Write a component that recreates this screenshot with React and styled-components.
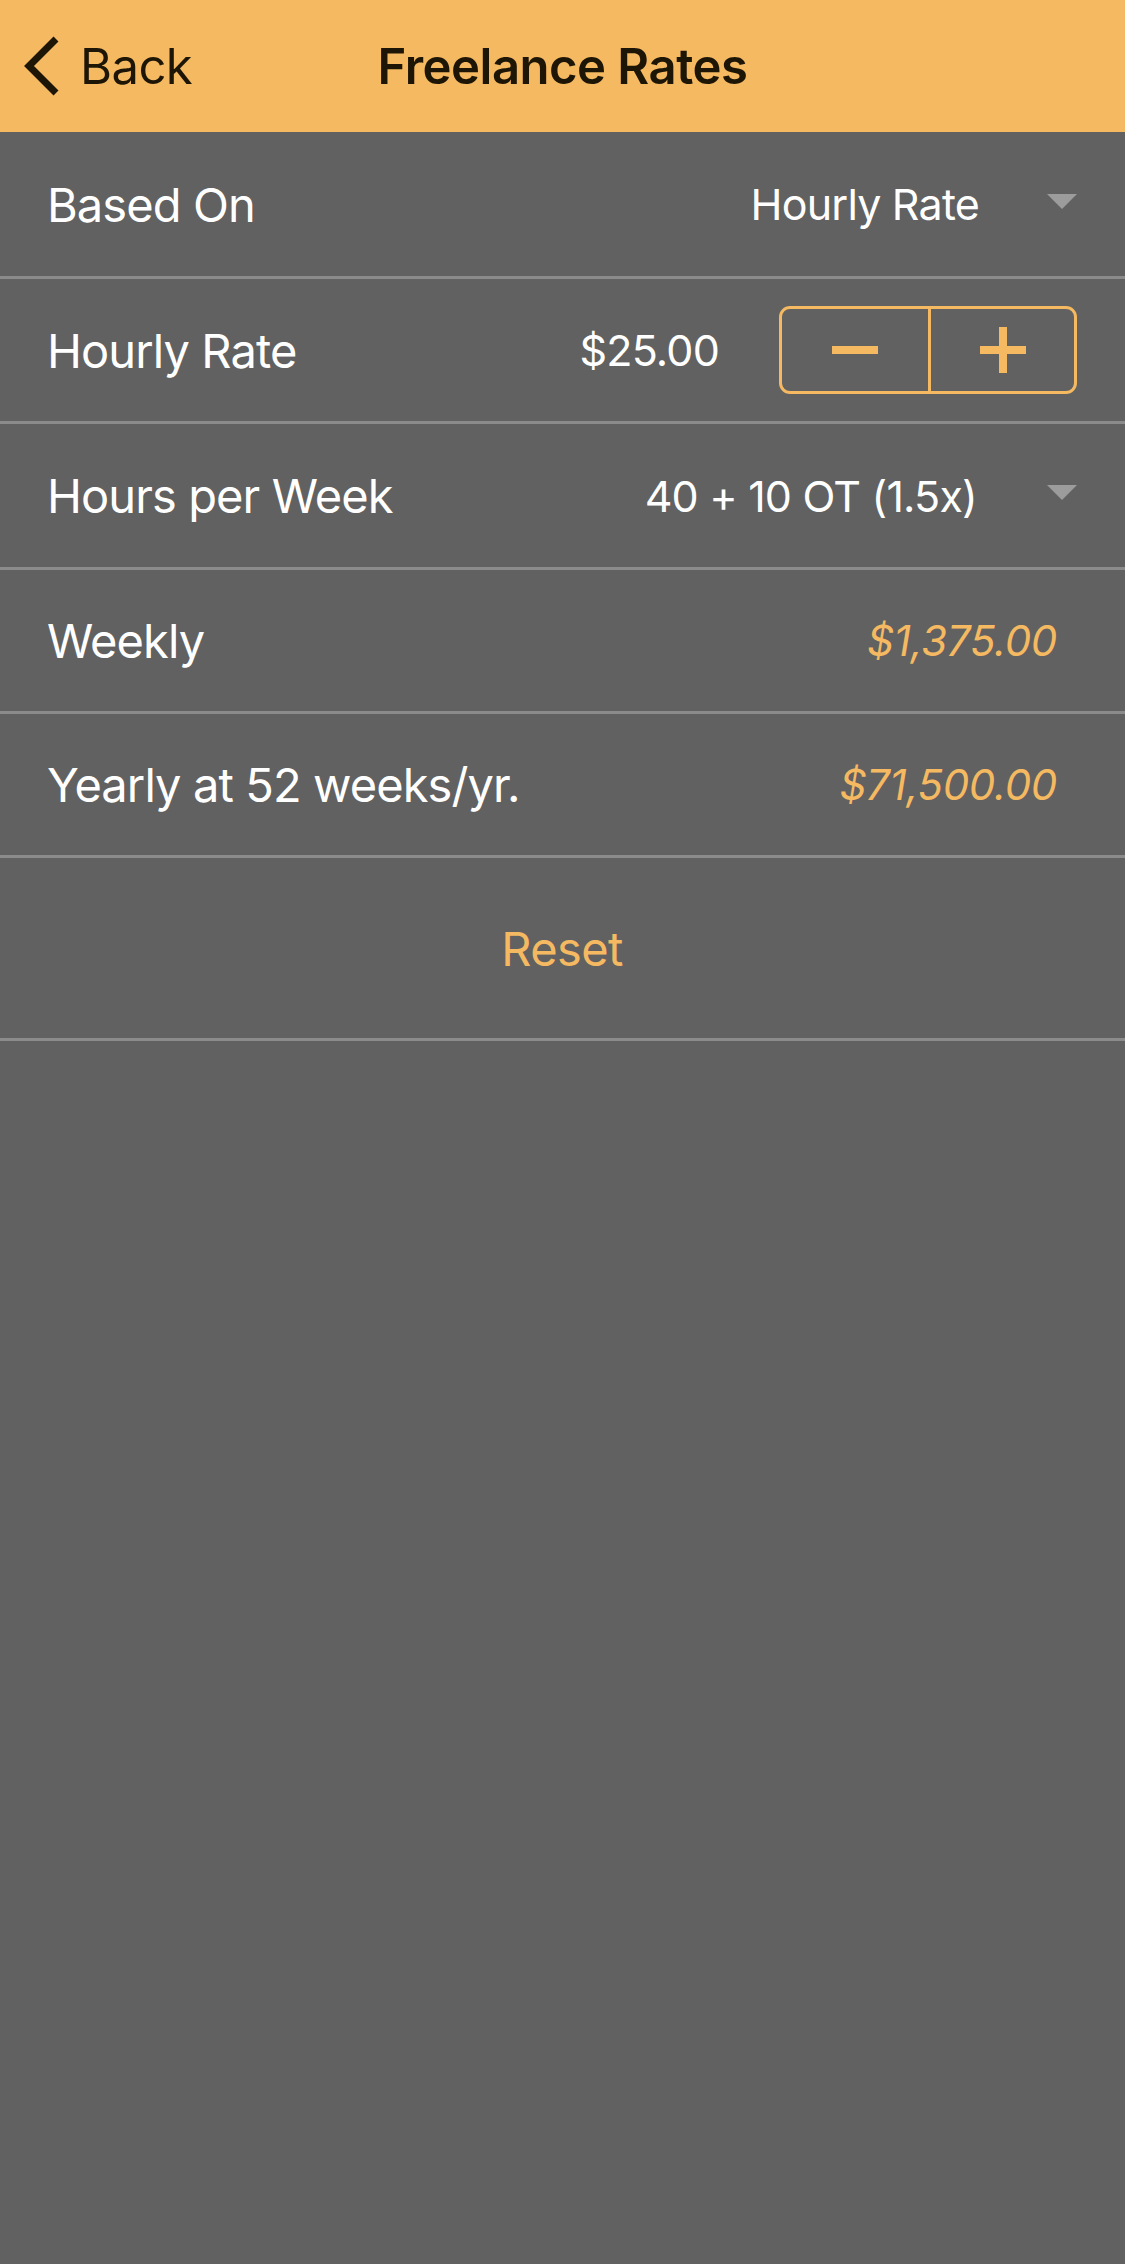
import React, { useState } from "react";
import styled, { createGlobalStyle } from "styled-components";

const GlobalStyle = createGlobalStyle`
  html, body {
    margin: 0;
    padding: 0;
    background: #616161;
  }
  body {
    font-family: Inter, "Noto Sans", "Liberation Sans", sans-serif;
    -webkit-font-smoothing: antialiased;
  }
  * {
    box-sizing: border-box;
  }
`;

const ORANGE = "#f5b961";

const Screen = styled.div`
  width: 1125px;
  min-height: 2264px;
  background: #616161;
  display: flex;
  flex-direction: column;
`;

const NavBar = styled.header`
  height: 132px;
  background: ${ORANGE};
  display: grid;
  grid-template-columns: 1fr auto 1fr;
  align-items: center;
  color: #1d1505;
`;

const BackButton = styled.button`
  justify-self: start;
  display: flex;
  align-items: center;
  gap: 20px;
  padding: 0 0 0 22px;
  border: none;
  background: none;
  color: inherit;
  font-family: inherit;
  font-size: 49px;
  letter-spacing: -0.6px;
  cursor: pointer;
`;

const Title = styled.h1`
  margin: 0;
  font-size: 49px;
  font-weight: 600;
  letter-spacing: -0.5px;
`;

const Row = styled.div`
  height: ${(p) => p.$h || 145}px;
  display: flex;
  align-items: center;
  justify-content: ${(p) => (p.$center ? "center" : "space-between")};
  padding: 0 48px 0 47px;
  border-bottom: 3px solid #8b8b8b;
`;

const Label = styled.span`
  color: #ffffff;
  font-size: 47px;
  letter-spacing: -0.9px;
`;

const Right = styled.div`
  display: flex;
  align-items: center;
  gap: ${(p) => p.$gap || 68}px;
`;

const Value = styled.span`
  color: #ffffff;
  font-size: 43px;
  letter-spacing: -0.8px;
`;

const Result = styled.span`
  color: ${ORANGE};
  font-size: 42px;
  font-style: italic;
  letter-spacing: -0.3px;
  margin-right: 20px;
`;

const Caret = styled.span`
  width: 0;
  height: 0;
  border-left: 15px solid transparent;
  border-right: 15px solid transparent;
  border-top: 15px solid #9c9c9c;
  margin-top: -6px;
`;

const Stepper = styled.div`
  width: 298px;
  height: 88px;
  display: grid;
  grid-template-columns: 1fr 1fr;
  border: 3px solid ${ORANGE};
  border-radius: 11px;
  overflow: hidden;
`;

const StepButton = styled.button`
  display: flex;
  align-items: center;
  justify-content: center;
  border: none;
  background: none;
  padding: 0;
  cursor: pointer;
  & + & {
    border-left: 3px solid ${ORANGE};
  }
`;

const ResetButton = styled.button`
  border: none;
  background: none;
  color: ${ORANGE};
  font-family: inherit;
  font-size: 47px;
  letter-spacing: -0.6px;
  cursor: pointer;
`;

const Chevron = () => (
  <svg width="38" height="60" viewBox="0 0 38 60">
    <path d="M34 3 L7 30 L34 57" fill="none" stroke="#1d1505" strokeWidth="7" />
  </svg>
);

const Minus = () => (
  <svg width="46" height="46" viewBox="0 0 46 46">
    <rect x="0" y="19" width="46" height="8" fill={ORANGE} />
  </svg>
);

const Plus = () => (
  <svg width="46" height="46" viewBox="0 0 46 46">
    <rect x="0" y="19" width="46" height="8" fill={ORANGE} />
    <rect x="19" y="0" width="8" height="46" fill={ORANGE} />
  </svg>
);

const money = (n) =>
  "$" + n.toLocaleString("en-US", { minimumFractionDigits: 2, maximumFractionDigits: 2 });

export default function App() {
  const [rate, setRate] = useState(25);
  // 40 regular hours + 10 overtime hours at 1.5x
  const weekly = rate * 40 + rate * 1.5 * 10;

  return (
    <>
      <GlobalStyle />
      <Screen>
        <NavBar>
          <BackButton>
            <Chevron />
            Back
          </BackButton>
          <Title>Freelance Rates</Title>
          <span />
        </NavBar>

        <Row $h={147}>
          <Label>Based On</Label>
          <Right>
            <Value>Hourly Rate</Value>
            <Caret />
          </Right>
        </Row>

        <Row>
          <Label>Hourly Rate</Label>
          <Right $gap={60}>
            <Value>{money(rate)}</Value>
            <Stepper>
              <StepButton onClick={() => setRate((r) => Math.max(0, r - 1))}>
                <Minus />
              </StepButton>
              <StepButton onClick={() => setRate((r) => r + 1)}>
                <Plus />
              </StepButton>
            </Stepper>
          </Right>
        </Row>

        <Row $h={146}>
          <Label>Hours per Week</Label>
          <Right $gap={70}>
            <Value>40 + 10 OT (1.5x)</Value>
            <Caret />
          </Right>
        </Row>

        <Row $h={144}>
          <Label>Weekly</Label>
          <Result>{money(weekly)}</Result>
        </Row>

        <Row $h={144}>
          <Label>Yearly at 52 weeks/yr.</Label>
          <Result>{money(weekly * 52)}</Result>
        </Row>

        <Row $h={183} $center>
          <ResetButton onClick={() => setRate(25)}>Reset</ResetButton>
        </Row>
      </Screen>
    </>
  );
}
